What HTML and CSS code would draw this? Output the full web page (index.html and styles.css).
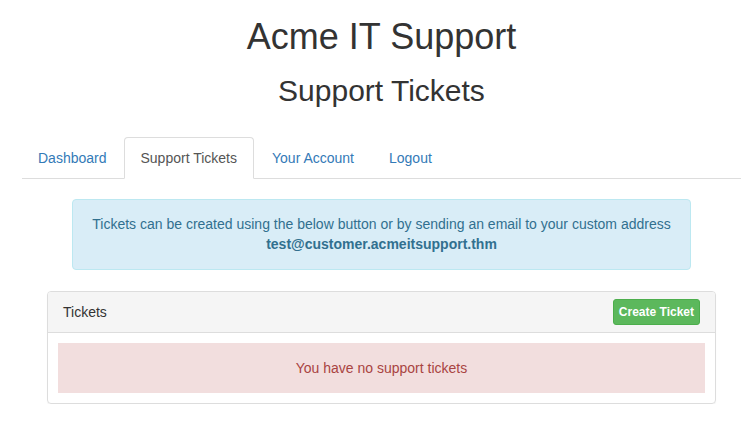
FILE: index.html
```html
<!DOCTYPE html>
<html>
<head>
<meta charset="utf-8">
<link rel="stylesheet" href="styles.css">
</head>
<body>
<div class="container">
  <h1 class="title">Acme IT Support</h1>
  <h2 class="subtitle">Support Tickets</h2>
  <ul class="tabs">
    <li class="tab tab-first"><a href="#">Dashboard</a></li>
    <li class="tab active"><a href="#">Support Tickets</a></li>
    <li class="tab tab-wide"><a href="#">Your Account</a></li>
    <li class="tab"><a href="#">Logout</a></li>
  </ul>
  <div class="info-wrap">
    <div class="alert alert-info">Tickets can be created using the below button or by sending an email to your custom address<br><strong>test@customer.acmeitsupport.thm</strong></div>
  </div>
  <div class="panel">
    <div class="panel-heading">
      <span>Tickets</span>
      <a href="#" class="btn-success">Create Ticket</a>
    </div>
    <div class="panel-body">
      <div class="alert alert-danger">You have no support tickets</div>
    </div>
  </div>
</div>
</body>
</html>
```
FILE: styles.css
```css
* { box-sizing: border-box; }
html, body { margin: 0; padding: 0; background: #fff; }
body {
  font-family: "Liberation Sans", Arial, sans-serif;
  font-size: 14px;
  line-height: 20px;
  color: #333;
}
.container {
  padding: 0 10px 0 22px;
}
.title {
  margin: 17px 0 0;
  font-size: 36px;
  font-weight: 500;
  line-height: 40px;
  text-align: center;
}
.subtitle {
  margin: 17px 0 0;
  font-size: 30px;
  font-weight: 500;
  line-height: 33px;
  text-align: center;
}
.tabs {
  list-style: none;
  margin: 30px 0 0;
  padding: 0;
  display: flex;
  border-bottom: 1px solid #ddd;
}
.tab {
  margin-bottom: -1px;
  margin-right: 2px;
}
.tab-first {
  margin-right: 1px;
}
.tab a {
  display: block;
  padding: 10px 15px;
  line-height: 20px;
  color: #337ab7;
  text-decoration: none;
  border: 1px solid transparent;
  border-radius: 4px 4px 0 0;
}
.tab-wide a {
  padding-right: 16px;
}
.tab.active a {
  color: #555;
  background: #fff;
  border-color: #ddd #ddd transparent;
  padding: 10px 16px;
}
.info-wrap {
  padding: 20px 50px 0;
}
.alert {
  border: 1px solid transparent;
  border-radius: 4px;
  text-align: center;
}
.alert-info {
  padding: 14px 15px 15px;
  background: #d9edf7;
  border-color: #bce8f1;
  color: #31708f;
}
.panel {
  margin: 21px 25px 0;
  border: 1px solid #ddd;
  border-radius: 4px;
  box-shadow: 0 1px 1px rgba(0,0,0,.05);
}
.panel-heading {
  display: flex;
  justify-content: space-between;
  align-items: center;
  height: 41px;
  padding: 0 15px;
  background: #f5f5f5;
  border-bottom: 1px solid #ddd;
  border-radius: 3px 3px 0 0;
}
.btn-success {
  display: block;
  padding: 4px 5px;
  font-size: 12px;
  font-weight: bold;
  line-height: 16px;
  color: #fff;
  text-decoration: none;
  background: #5cb85c;
  border: 1px solid #4cae4c;
  border-radius: 3px;
}
.panel-body {
  padding: 10px;
}
.alert-danger {
  background: #f2dede;
  color: #a94442;
  border: 0;
  border-radius: 0;
  padding: 15px;
}
```
